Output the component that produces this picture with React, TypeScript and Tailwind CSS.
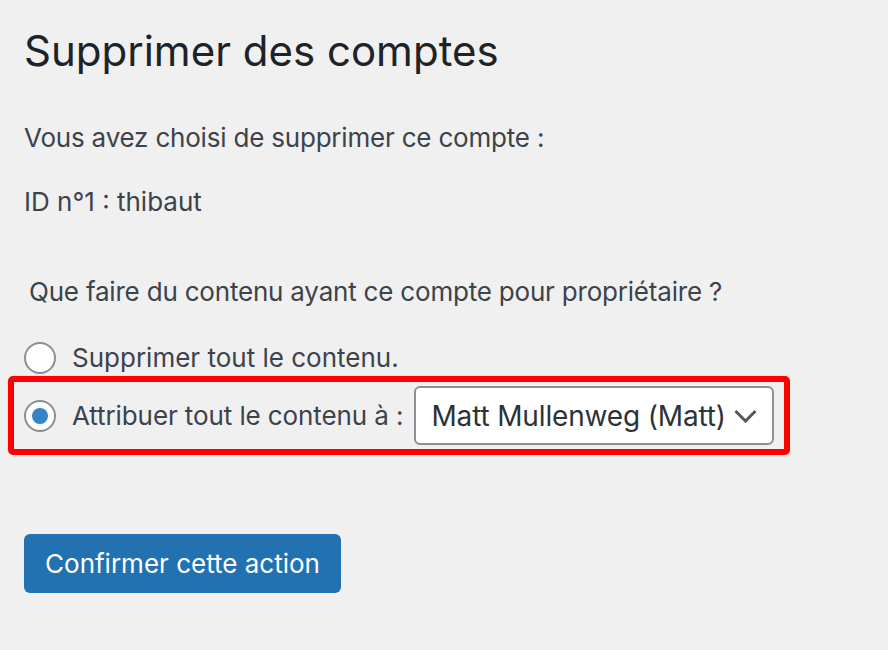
export default function App() {
  return (
    <div className="min-h-[650px] w-[888px] bg-[#f0f0f1] pl-6 pt-[22px] font-['Inter',sans-serif] text-[#3c434a]">
      <h1 className="h-[58px] text-[42px] leading-[58px] font-normal text-[#1d2327]">Supprimer des comptes</h1>
      <p className="mt-[38px] h-10 text-[26px] leading-10 tracking-[-0.2px]">Vous avez choisi de supprimer ce compte :</p>
      <p className="mt-6 h-10 text-[26px] leading-10">ID n°1 : thibaut</p>

      <fieldset>
        <p className="mt-[50px] h-10 pl-[5px] text-[26px] leading-10 tracking-[-0.2px]">
          Que faire du contenu ayant ce compte pour propriétaire ?
        </p>

        <label className="mt-7 flex h-9 items-center gap-4">
          <span className="h-8 w-8 shrink-0 rounded-full border-2 border-[#8c8f94] bg-white" />
          <span className="text-[26px] leading-10">Supprimer tout le contenu.</span>
        </label>

        <div className="-ml-4 flex h-[79px] w-[782px] items-center rounded-[5px] border-[6px] border-[#ff0000] pl-[10px]">
          <span className="flex h-8 w-8 shrink-0 items-center justify-center rounded-full border-2 border-[#8c8f94] bg-white">
            <span className="h-4 w-4 rounded-full bg-[#3582c4]" />
          </span>
          <span className="ml-4 text-[26px] leading-10 tracking-[-0.1px]">Attribuer tout le contenu à :</span>
          <div className="ml-[11px] flex h-[59px] w-[360px] items-center justify-between rounded-[6px] border-2 border-[#8c8f94] bg-white pl-[15px] pr-[15px]">
            <span className="text-[28px] leading-10 tracking-[-0.15px] text-[#2c3338]">Matt Mullenweg (Matt)</span>
            <svg width="23" height="14" viewBox="0 0 23 14" fill="none">
              <path d="M1.5 2l10 10 10-10" stroke="#50575e" strokeWidth="3" />
            </svg>
          </div>
        </div>
      </fieldset>

      <button className="mt-[79px] h-[59px] w-[317px] rounded-[6px] bg-[#2271b1] text-[26px] text-white">
        Confirmer cette action
      </button>
    </div>
  );
}
